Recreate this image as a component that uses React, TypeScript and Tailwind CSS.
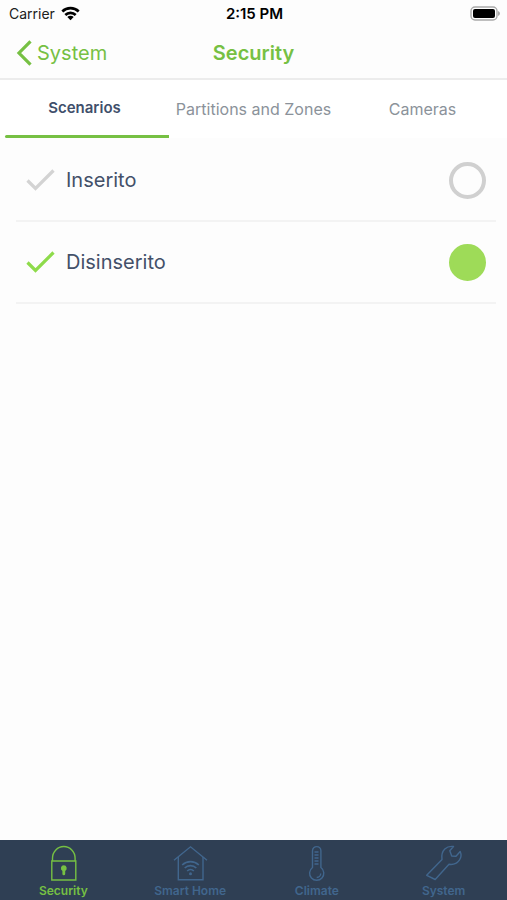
import { useState } from 'react'
import type { ReactNode } from 'react'
import clsx from 'clsx'

interface Scenario {
  id: string
  name: string
}

interface NavItem {
  label: string
  icon: ReactNode
}

const tabs = ['Scenarios', 'Partitions and Zones', 'Cameras']

const scenarios: Scenario[] = [
  { id: 'inserito', name: 'Inserito' },
  { id: 'disinserito', name: 'Disinserito' },
]

const iconProps = {
  width: 40,
  height: 39,
  viewBox: '0 0 40 39',
  fill: 'none',
  stroke: 'currentColor',
  strokeWidth: 1.4,
  'aria-hidden': true,
}

const navItems: NavItem[] = [
  {
    label: 'Security',
    icon: (
      <svg {...iconProps}>
        <path d="M8.800 17h24v19h-24z" />
        <path d="M9.500 17v-2.700a11.300 11.800 0 0 1 22.600 0V17" />
        <path d="M20.800 21.300a3 3 0 0 0-1.400 5.600v3a1.400 1.400 0 0 0 2.800 0v-3a3 3 0 0 0-1.400-5.600z" fill="currentColor" stroke="none" />
      </svg>
    ),
  },
  {
    label: 'Smart Home',
    icon: (
      <svg {...iconProps}>
        <path d="M4 16.300 20.500 2.800 37 16.300" />
        <path d="M8.300 13v22.800h24.700V13" />
        <path d="M12.200 21a12 12 0 0 1 16.600 0M14.700 24a8.300 8.300 0 0 1 11.600 0M17.200 27a4.800 4.800 0 0 1 6.600 0" strokeWidth={1.700} />
        <circle cx="20.500" cy="29.700" r="1.500" fill="currentColor" stroke="none" />
      </svg>
    ),
  },
  {
    label: 'Climate',
    icon: (
      <svg {...iconProps}>
        <path d="M15.500 23.500V6.800a4.200 4.200 0 0 1 8.400 0v16.700a7.100 7.100 0 1 1-8.400 0z" />
        <path d="M17.500 8h4M17.500 11h4M17.500 14h4M17.500 17h4M17.500 20h4" />
        <path d="M23.700 29.500a4 4 0 0 1-4 4" />
      </svg>
    ),
  },
  {
    label: 'System',
    icon: (
      <svg {...iconProps} strokeLinejoin="round">
        <path d="M2.700 31.300 18 15.500C17.300 11 18.300 7.500 20.800 5 23 2.900 26 2.100 29.500 2.500L25.800 6.800l1.900 5.200 4.300.2 4.200-4.700c1.300 3 1.100 6-.8 8.600-2.600 3.600-6.400 4.800-10.400 4.200L11.200 35.500z" />
      </svg>
    ),
  },
]

function StatusBar() {
  return (
    <div className="grid h-[27px] grid-cols-3 items-center pl-[9px] pr-[7px] text-sm text-[#202020]">
      <div className="flex items-center gap-1.5">
        <span>Carrier</span>
        <svg width="19" height="15" viewBox="0 0 19 15" fill="none" stroke="black" strokeWidth="2.600" aria-hidden="true">
          <path d="M1.300 5.500a11.600 11.600 0 0 1 16.400 0M4.300 9a7.400 7.400 0 0 1 10.400 0" />
          <path d="M9.500 14.200 6.300 11a4.600 4.600 0 0 1 6.400 0z" fill="black" stroke="none" />
        </svg>
      </div>
      <span className="text-center text-[15px] font-semibold text-black">2:15 PM</span>
      <svg className="justify-self-end" width="30" height="15" viewBox="0 0 30 15" aria-hidden="true">
        <rect x="1" y="1" width="26" height="13" rx="4" fill="white" stroke="#a9a9a9" strokeWidth="1.400" />
        <rect x="3" y="3" width="22" height="9" rx="2" fill="black" />
        <path d="M28 5v5q2-.8 2-2.500t-2-2.500z" fill="#a9a9a9" />
      </svg>
    </div>
  )
}

function Header() {
  return (
    <header className="grid h-[53px] grid-cols-[1fr_auto_1fr] items-center border-b-2 border-[#ececec] px-4 text-xl text-[#76c043]">
      <a href="#system" className="flex items-center gap-[5px]">
        <svg width="16" height="26" viewBox="0 0 16 26" fill="none" stroke="currentColor" strokeWidth="3.200" aria-hidden="true">
          <path d="M14.500 1.300 3 13l11.500 11.700" />
        </svg>
        System
      </a>
      <h1 className="font-semibold">Security</h1>
    </header>
  )
}

export default function App() {
  const [activeTab, setActiveTab] = useState('Scenarios')
  const [activeScenario, setActiveScenario] = useState('disinserito')

  return (
    <div className="flex min-h-screen flex-col bg-[#fdfdfd] font-['Inter',sans-serif]">
      <StatusBar />
      <Header />

      <div role="tablist" className="grid grid-cols-3 bg-white">
        {tabs.map((tab) => (
          <button
            key={tab}
            type="button"
            role="tab"
            aria-selected={tab === activeTab}
            onClick={() => setActiveTab(tab)}
            className={clsx(
              'flex h-[58px] flex-col whitespace-nowrap',
              tab === activeTab ? 'text-[15px] font-semibold text-[#3f4f6b]' : 'text-base text-[#8b929a]',
            )}
          >
            <span className="flex w-full flex-1 items-center justify-center pt-0.5">{tab}</span>
            <span className={clsx('ml-[5px] h-[3px] self-stretch rounded-l-full', tab === activeTab && 'bg-[#76c043]')} />
          </button>
        ))}
      </div>

      <main className="flex-1 pl-4 pr-[11px] pt-0.5">
        {scenarios.map((scenario) => {
          const selected = scenario.id === activeScenario
          return (
            <label
              key={scenario.id}
              className="flex h-[82px] items-center border-b-2 border-[#f3f3f3] px-2.5 text-xl text-[#435069]"
            >
              <svg
                className={selected ? 'text-[#8edb4b]' : 'text-[#d3d3d3]'}
                width="30"
                height="24"
                viewBox="0 0 30 24"
                fill="none"
                stroke="currentColor"
                strokeWidth="3.200"
                aria-hidden="true"
              >
                <path d="M1.500 12.500 9.500 20.500 27.500 2.500" />
              </svg>
              <span className="ml-2.5 flex-1">{scenario.name}</span>
              <input
                type="radio"
                name="scenario"
                checked={selected}
                onChange={() => setActiveScenario(scenario.id)}
                className="size-[37px] appearance-none rounded-full border-4 border-[#d0d0d0] checked:border-[#9edb58] checked:bg-[#9edb58]"
              />
            </label>
          )
        })}
      </main>

      <nav className="grid h-[60px] grid-cols-4 bg-[#2f3f54]">
        {navItems.map((item) => (
          <a
            key={item.label}
            href={`#${item.label}`}
            className={clsx(
              'flex flex-col items-center pt-1 text-xs font-semibold leading-4',
              item.label === 'Security' ? 'text-[#76c043]' : 'text-[#41668d]',
            )}
          >
            {item.icon}
            {item.label}
          </a>
        ))}
      </nav>
    </div>
  )
}
